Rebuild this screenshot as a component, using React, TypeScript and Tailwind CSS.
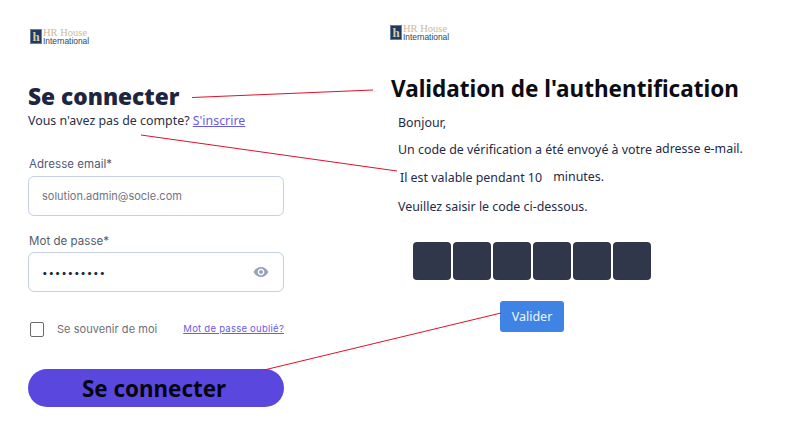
import React from "react";

function Logo({ className }: { className: string }) {
  return (
    <div className={`flex items-center h-[16px] ${className}`}>
      <div className="w-[12px] h-[15px] bg-[#1f3a63] border border-[#6b7f99] flex items-center justify-center text-[#d9c9a3] text-[13px] leading-none font-bold font-['Liberation_Serif',serif]">
        h
      </div>
      <div className="ml-[1px] flex flex-col">
        <span className="block h-[9px] text-[10.5px] leading-[9px] text-[#cdbb94] font-['Liberation_Serif',serif] whitespace-nowrap">HR House</span>
        <span className="block h-[8px] text-[8.4px] leading-[8px] text-[#2b4468] font-['Liberation_Sans',sans-serif] whitespace-nowrap">International</span>
      </div>
    </div>
  );
}

export default function App() {
  return (
    <div className="relative w-[797px] h-[429px] overflow-hidden bg-white flex font-['Noto_Sans',sans-serif]">
      <div className="w-[390px] shrink-0 pl-[28px] pt-[28px]">
        <Logo className="ml-[2px]" />
        <h1 className="mt-[38px] text-[22.7px] leading-[30px] font-black text-[#1e2540] whitespace-nowrap">Se connecter</h1>
        <p className="text-[12.4px] leading-[18px] text-[#2a2f4a]">
          Vous n'avez pas de compte? <a className="text-[#6a5be2] underline">S'inscrire</a>
        </p>
        <div className="w-[256px] font-['Inter',sans-serif]">
          <label className="block mt-[26px] ml-[1px] text-[11.5px] leading-[16px] text-[#525a73] tracking-[0.05px]">Adresse email*</label>
          <div className="mt-[4px] h-[40px] border border-[#c6d0e1] rounded-[6px] pl-[13px] flex items-center text-[11px] text-[#6f7585]">
            solution.admin@socle.com
          </div>
          <label className="block mt-[17px] ml-[1px] text-[11.5px] leading-[16px] text-[#525a73] tracking-[0.05px]">Mot de passe*</label>
          <div className="mt-[3px] h-[40px] border border-[#c6d0e1] rounded-[6px] pl-[13px] pr-[14px] flex items-center justify-between">
            <span className="text-[10px] text-[#23283a] tracking-[0.75px] leading-none">••••••••••</span>
            <svg width="16" height="16" viewBox="0 0 24 24" fill="#98a3ba">
              <path d="M12 4.5C7 4.5 2.73 7.61 1 12c1.73 4.39 6 7.5 11 7.5s9.27-3.11 11-7.5c-1.73-4.39-6-7.5-11-7.5zM12 17c-2.76 0-5-2.24-5-5s2.24-5 5-5 5 2.24 5 5-2.24 5-5 5zm0-8c-1.66 0-3 1.34-3 3s1.34 3 3 3 3-1.34 3-3-1.34-3-3-3z" />
            </svg>
          </div>
          <div className="mt-[29px] flex items-center justify-between h-[16px]">
            <div className="flex items-center ml-[2px]">
              <span className="w-[14px] h-[15px] border border-[#6b6b6b] rounded-[2px] bg-white" />
              <span className="ml-[13px] text-[11px] text-[#6e6e76] tracking-[0.05px]">Se souvenir de moi</span>
            </div>
            <a className="text-[9.5px] text-[#6a5be2] underline tracking-[0.25px]">Mot de passe oublié?</a>
          </div>
          <button className="mt-[32px] w-full h-[38px] rounded-[19px] bg-[#5a48de] text-[#050510] text-[22.4px] leading-none font-bold font-['Noto_Sans',sans-serif] flex items-center justify-center pr-[4px] pt-[3px]">
            Se connecter
          </button>
        </div>
      </div>

      <div className="flex-1 pt-[24px]">
        <Logo className="" />
        <h2 className="mt-[33px] ml-[1px] text-[22.5px] leading-[32px] font-bold text-[#0b0d12] whitespace-nowrap">Validation de l'authentification</h2>
        <div className="ml-[8px] text-[12.4px] text-[#1e2a4a]">
          <p className="mt-[9px] leading-[17px]">Bonjour,</p>
          <p className="mt-[10px] leading-[17px] whitespace-nowrap">
            Un code de vérification a été envoyé à votre <span className="relative top-[-1px]">adresse e-mail.</span>
          </p>
          <p className="mt-[11px] leading-[17px] ml-[2px] whitespace-nowrap">
            Il est valable pendant 10 <span className="relative top-[-1px] ml-[8px]">minutes.</span>
          </p>
          <p className="mt-[12px] leading-[17px] whitespace-nowrap">Veuillez saisir le code ci-dessous.</p>
        </div>
        <div className="mt-[27px] ml-[23px] flex gap-[2px]">
          {[0, 1, 2, 3, 4, 5].map((i) => (
            <div key={i} className="w-[38px] h-[38px] rounded-[4px] bg-[#30374b]" />
          ))}
        </div>
        <button className="mt-[21px] ml-[110px] w-[64px] h-[31px] rounded-[3px] bg-[#3f84e5] text-[#eef5ff] text-[12.5px] flex items-center justify-center pt-[1px]">
          Valider
        </button>
      </div>

      <svg className="absolute inset-0 pointer-events-none" width="797" height="429" fill="none" stroke="#e0112b" strokeWidth="1">
        <line x1="192" y1="97.5" x2="373" y2="90" />
        <line x1="141" y1="135" x2="397" y2="171" />
        <line x1="264" y1="370" x2="501" y2="313" />
      </svg>
    </div>
  );
}
